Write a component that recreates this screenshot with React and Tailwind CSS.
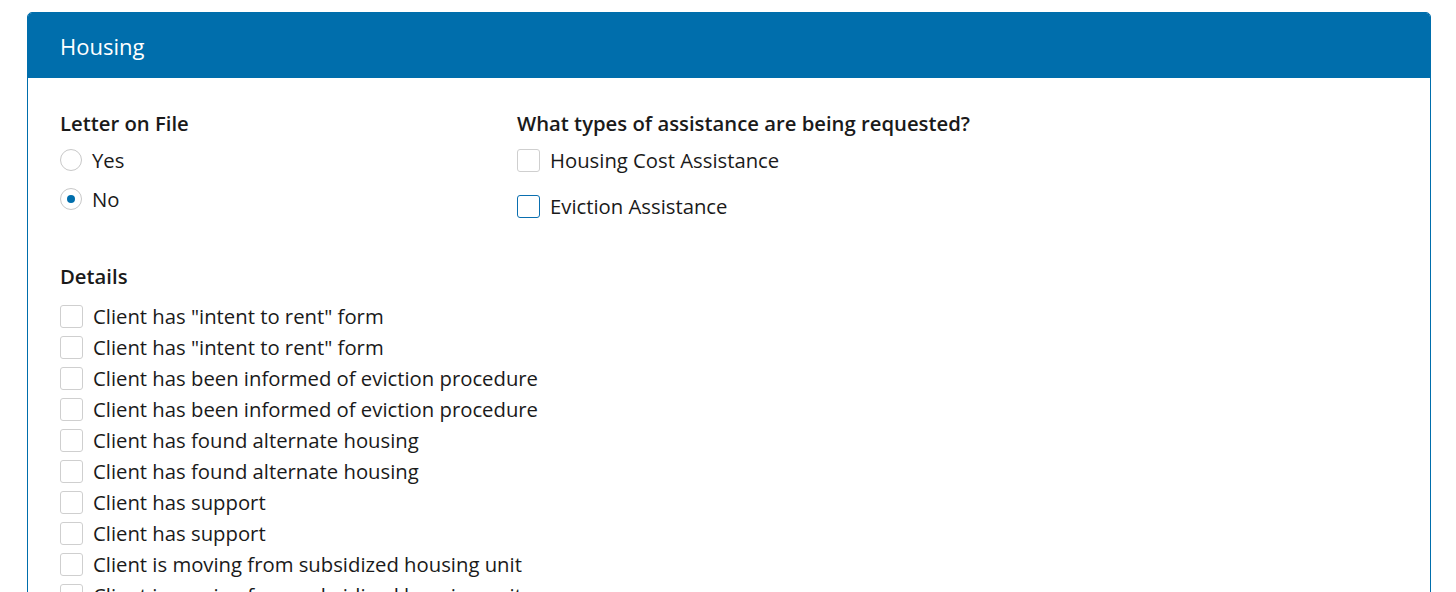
export default function App() {
  const details = [
    'Client has "intent to rent" form',
    'Client has "intent to rent" form',
    'Client has been informed of eviction procedure',
    'Client has been informed of eviction procedure',
    'Client has found alternate housing',
    'Client has found alternate housing',
    'Client has support',
    'Client has support',
    'Client is moving from subsidized housing unit',
    'Client is moving from subsidized housing unit',
  ];
  const font = { fontFamily: '"Open Sans", "Noto Sans", sans-serif' };
  const Box = ({ blue }) => (
    <span
      className={`inline-block w-[23px] h-[23px] rounded-[3px] bg-white border shrink-0 ${
        blue ? 'border-[#0a6fb0]' : 'border-[#cfcfcf]'
      }`}
    />
  );
  return (
    <div className="w-[1456px] h-[592px] bg-white overflow-hidden pt-[12px] pl-[27px]" style={font}>
      <div className="w-[1404px] h-[600px] border border-[#006eac] rounded-t-[5px] overflow-hidden">
        <div className="h-[65px] bg-[#006eac] flex items-center pl-[32px]">
          <span className="text-white text-[22px] leading-none">Housing</span>
        </div>
        <div className="pl-[32px] pt-[33px] text-[#1a1a1a]">
          <div className="flex">
            <div className="w-[457px]">
              <div className="text-[20.3px] font-semibold leading-[24px]">Letter on File</div>
              <div className="mt-[13px] flex items-center gap-[10px] h-[24px]">
                <span className="w-[22px] h-[22px] rounded-full border border-[#c8c8c8] bg-white" />
                <span className="text-[20.3px]">Yes</span>
              </div>
              <div className="mt-[15px] flex items-center gap-[10px] h-[24px]">
                <span className="w-[22px] h-[22px] rounded-full border border-[#c8c8c8] bg-white flex items-center justify-center">
                  <span className="w-[8px] h-[8px] rounded-full bg-[#006eac]" />
                </span>
                <span className="text-[20.3px]">No</span>
              </div>
            </div>
            <div>
              <div className="text-[20.3px] font-semibold leading-[24px]">What types of assistance are being requested?</div>
              <div className="mt-[13px] flex items-center gap-[10px] h-[24px]">
                <Box />
                <span className="text-[20.3px]">Housing Cost Assistance</span>
              </div>
              <div className="mt-[22px] flex items-center gap-[10px] h-[24px]">
                <Box blue />
                <span className="text-[20.3px]">Eviction Assistance</span>
              </div>
            </div>
          </div>
          <div className="mt-[46px] text-[20.3px] font-semibold leading-[24px]">Details</div>
          <div className="mt-[13px] flex flex-col">
            {details.map((d, i) => (
              <div key={i} className="flex items-center gap-[10px] h-[31px]">
                <Box />
                <span className="text-[20.3px]">{d}</span>
              </div>
            ))}
          </div>
        </div>
      </div>
    </div>
  );
}
